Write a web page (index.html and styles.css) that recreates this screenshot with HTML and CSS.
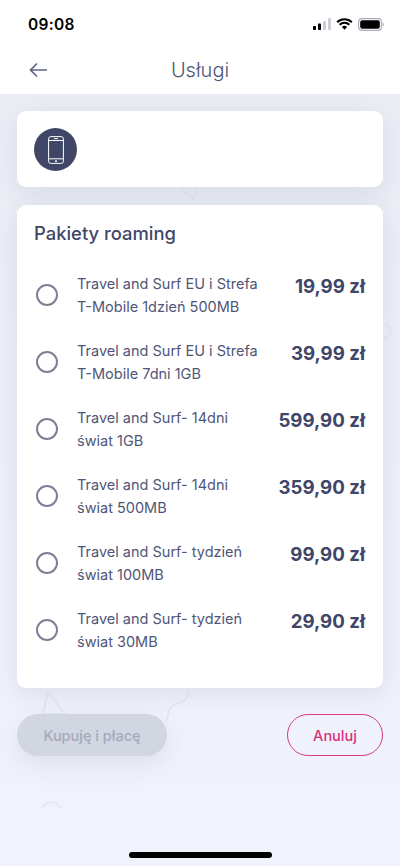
FILE: index.html
```html
<!DOCTYPE html>
<html lang="pl">
<head>
<meta charset="utf-8">
<title>Usługi</title>
<link rel="stylesheet" href="styles.css">
</head>
<body>
<div class="screen">
  <header class="top">
    <div class="status">
      <span class="time">09:08</span>
      <div class="status-icons">
        <svg width="18" height="12" viewBox="0 0 18 12"><rect x="0" y="8" width="3" height="4" rx=".7" fill="#000"/><rect x="5" y="5.5" width="3" height="6.5" rx=".7" fill="#000"/><rect x="10" y="3" width="3" height="9" rx=".7" fill="#c9cdd8"/><rect x="15" y="0" width="3" height="12" rx=".7" fill="#c9cdd8"/></svg>
        <svg width="17" height="12" viewBox="0 0 17 12"><path d="M1.2 4.2a10.5 10.5 0 0 1 14.6 0M3.6 6.7a7 7 0 0 1 9.8 0" fill="none" stroke="#000" stroke-width="2"/><path d="M8.5 11.8 5.9 9a3.8 3.8 0 0 1 5.2 0z" fill="#000"/></svg>
        <svg width="26" height="13" viewBox="0 0 26 13"><rect x=".6" y=".6" width="22.8" height="11.8" rx="3.4" fill="none" stroke="#a9aebf" stroke-width="1.2"/><rect x="2.2" y="2.2" width="19.6" height="8.6" rx="2" fill="#000"/><path d="M24.6 4.5c.8.3 1.2 1 1.2 2s-.4 1.700-1.200 2z" fill="#a9aebf"/></svg>
      </div>
    </div>
    <div class="nav">
      <svg class="back" width="20" height="16" viewBox="0 0 20 16"><path d="M18 8H2M8 1.500 1.500 8 8 14.500" fill="none" stroke="#5e6585" stroke-width="1.700"/></svg>
      <h1 class="nav-title">Usługi</h1>
    </div>
  </header>

  <main class="content">
    <svg class="decor" width="400" height="772" viewBox="0 0 400 772"><g fill="none" stroke="#e4e8f2" stroke-width="2"><path d="M181 94l12 11 5-11"/><path d="M48 598l-5 22h22z"/><path d="M188 596c0 12-6 12-12 14-8 2-7 10-10 18"/><path d="M42 714a10 10 0 0 1 18 0"/><path d="M384 230a7 7 0 0 1 0 14"/></g></svg>
    <section class="card device">
      <div class="avatar">
        <svg width="16" height="28" viewBox="0 0 16 28"><rect x=".6" y=".6" width="14.800" height="26.800" rx="2.200" fill="none" stroke="#fff" stroke-width="1"/><path d="M.6 4.500h14.800M.6 22.800h14.800" stroke="#fff" stroke-width="1"/><path d="M6 2.600h4" stroke="#fff" stroke-width="1"/><circle cx="8" cy="25.200" r="1" fill="#fff"/></svg>
      </div>
    </section>

    <section class="card packages">
      <h2 class="packages-title">Pakiety roaming</h2>
      <ul class="list">
        <li class="row"><span class="radio"></span><span class="name">Travel and Surf EU i Strefa<br>T-Mobile 1dzień 500MB</span><span class="price">19,99 zł</span></li>
        <li class="row"><span class="radio"></span><span class="name">Travel and Surf EU i Strefa<br>T-Mobile 7dni 1GB</span><span class="price">39,99 zł</span></li>
        <li class="row"><span class="radio"></span><span class="name">Travel and Surf- 14dni<br>świat 1GB</span><span class="price">599,90 zł</span></li>
        <li class="row"><span class="radio"></span><span class="name">Travel and Surf- 14dni<br>świat 500MB</span><span class="price">359,90 zł</span></li>
        <li class="row"><span class="radio"></span><span class="name">Travel and Surf- tydzień<br>świat 100MB</span><span class="price">99,90 zł</span></li>
        <li class="row"><span class="radio"></span><span class="name">Travel and Surf- tydzień<br>świat 30MB</span><span class="price">29,90 zł</span></li>
      </ul>
    </section>

    <div class="actions">
      <button class="btn buy" type="button">Kupuję i płacę</button>
      <button class="btn cancel" type="button">Anuluj</button>
    </div>
  </main>
  <div class="home-bar"></div>
</div>
</body>
</html>
```

FILE: styles.css
```css
* { box-sizing: border-box; }
html, body { margin: 0; padding: 0; }
body { width: 400px; height: 866px; overflow: hidden; font-family: Inter, "Noto Sans", sans-serif; }
.screen { position: relative; width: 400px; height: 866px; display: flex; flex-direction: column; background: linear-gradient(180deg, #e9ecf3 0%, #edf0f8 50%, #f0f3fb 100%); }
.top { height: 94px; background: #fff; flex: none; }
.status { height: 48px; padding: 0 16px 0 28px; display: flex; align-items: center; justify-content: space-between; }
.time { font-size: 15.500px; font-weight: 600; color: #000; letter-spacing: .3px; }
.status-icons { display: flex; align-items: center; gap: 5px; }
.nav { position: relative; height: 46px; display: flex; align-items: center; justify-content: center; }
.back { position: absolute; left: 29px; top: 14px; }
.nav-title { margin: 0 0 3px; font-size: 20px; font-weight: 300; color: #4f5678; }
.content { position: relative; flex: 1; padding: 17px 17px 0; display: flex; flex-direction: column; }
.decor { position: absolute; left: 0; top: 0; }
.card { position: relative; background: #fff; border-radius: 9px; box-shadow: 0 6px 24px rgba(60, 70, 110, .11); }
.device { height: 76px; padding: 17px; display: flex; align-items: flex-start; }
.avatar { width: 43px; height: 43px; border-radius: 50%; background: #3f4668; display: flex; align-items: center; justify-content: center; }
.packages { margin-top: 18px; height: 483px; padding: 17px 18px 0 17px; }
.packages-title { margin: 0; font-size: 18.400px; line-height: 22px; font-weight: 500; color: #3f4668; }
.list { list-style: none; margin: 28px 0 0; padding: 0; }
.row { height: 67px; display: flex; align-items: flex-start; }
.radio { width: 22px; height: 22px; margin: 12px 0 0 2px; flex: none; border: 2px solid #7d8093; border-radius: 50%; }
.name { margin-left: 19px; flex: 1; font-size: 14.500px; line-height: 23px; color: #4f5677; }
.price { margin-top: 3px; font-size: 18.700px; line-height: 23px; font-weight: 700; color: #3f4668; white-space: nowrap; }
.actions { position: relative; margin-top: 26px; display: flex; justify-content: space-between; }
.btn { height: 42px; border-radius: 21px; font-family: inherit; font-size: 14.500px; font-weight: 500; padding: 0; }
.buy { width: 150px; border: 0; background: #d2d6e1; color: #a4a9bb; box-shadow: 0 8px 24px rgba(60, 70, 110, .1); }
.cancel { width: 96px; border: 1.500px solid #dc3b82; background: transparent; color: #d92f7c; }
.home-bar { position: absolute; left: 129px; bottom: 8px; width: 143px; height: 6px; border-radius: 3px; background: #000; }
```
